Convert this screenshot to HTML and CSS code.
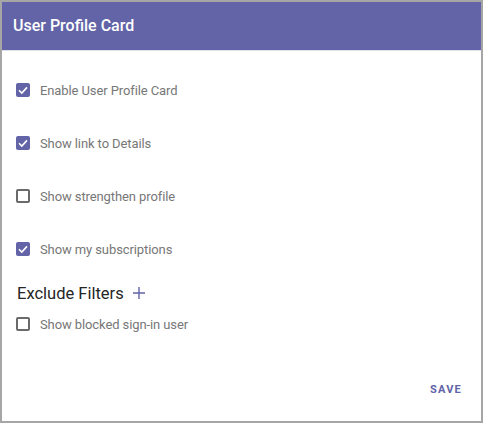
FILE: index.html
```html
<!DOCTYPE html>
<html>
<head>
<meta charset="utf-8">
<link rel="stylesheet" href="styles.css">
</head>
<body>
<div class="card">
  <div class="header">User Profile Card</div>
  <div class="divider"></div>
  <div class="content">
    <div class="row"><span class="box checked"><svg viewBox="0 0 14 14" width="14" height="14"><path d="M3 7.2 L5.8 10 L11 4.4" fill="none" stroke="#fff" stroke-width="1.6"/></svg></span><span class="label">Enable User Profile Card</span></div>
    <div class="row"><span class="box checked"><svg viewBox="0 0 14 14" width="14" height="14"><path d="M3 7.2 L5.8 10 L11 4.4" fill="none" stroke="#fff" stroke-width="1.6"/></svg></span><span class="label">Show link to Details</span></div>
    <div class="row"><span class="box"></span><span class="label">Show strengthen profile</span></div>
    <div class="row"><span class="box checked"><svg viewBox="0 0 14 14" width="14" height="14"><path d="M3 7.2 L5.8 10 L11 4.4" fill="none" stroke="#fff" stroke-width="1.6"/></svg></span><span class="label">Show my subscriptions</span></div>
    <div class="section">Exclude Filters <svg class="plus" viewBox="0 0 12 12" width="12" height="12"><path d="M6 0 V12 M0 6 H12" stroke="#6264a7" stroke-width="1.4"/></svg></div>
    <div class="row small"><span class="box"></span><span class="label">Show blocked sign-in user</span></div>
  </div>
  <div class="footer"><span class="save">SAVE</span></div>
</div>
</body>
</html>
```
FILE: styles.css
```css
html, body { margin: 0; padding: 0; }
body { width: 483px; height: 423px; background: #fff; font-family: Roboto, "Noto Sans", sans-serif; }
.card {
  box-sizing: border-box;
  width: 483px; height: 423px;
  border: 2px solid #a6a6a6;
  display: flex; flex-direction: column;
  background: #fff;
}
.header {
  height: 48px;
  background: #6264a7;
  color: #fff;
  font-size: 16px;
  font-weight: 500;
  line-height: 48px;
  padding-left: 11px;
}
.divider { height: 1px; background: #e0e0ea; }
.content { flex: 1; padding: 25px 0 0 14px; display: flex; flex-direction: column; }
.row { display: flex; align-items: center; height: 28px; margin-bottom: 25px; }
.row.small { margin-bottom: 0; }
.box {
  box-sizing: border-box;
  width: 14px; height: 14px;
  border: 2px solid #6a6a6a;
  border-radius: 2px;
  display: flex; align-items: center; justify-content: center;
  margin-right: 10px;
}
.box.checked { background: #6264a7; border: none; }
.label { font-size: 13px; color: #777; letter-spacing: -0.1px; }
.section { font-size: 16.5px; color: #252525; height: 28px; display: flex; align-items: center; margin-top: -9px; margin-left: 1px; margin-bottom: 3px; }
.plus { margin-left: 9px; }
.footer { display: flex; justify-content: flex-end; padding: 0 19px 25px 0; }
.save { font-size: 11px; font-weight: 700; letter-spacing: 1.2px; color: #6264a7; }
```
